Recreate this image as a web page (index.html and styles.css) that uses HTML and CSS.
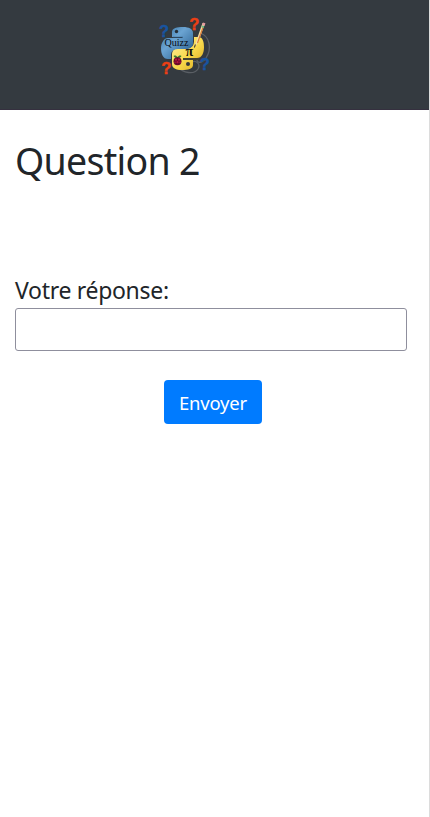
FILE: index.html
```html
<!DOCTYPE html>
<html lang="fr">
<head>
<meta charset="utf-8">
<meta name="viewport" content="width=device-width, initial-scale=1">
<title>Quizz Python</title>
<link rel="stylesheet" href="styles.css">
</head>
<body>
<div class="page">
  <header class="navbar">
    <svg class="logo" viewBox="0 0 70 70" role="img" aria-label="Quizz">
      <defs>
        <linearGradient id="blue" x1="0" y1="0" x2="1" y2="1">
          <stop offset="0" stop-color="#326d9f"/><stop offset=".4" stop-color="#6ba4d2"/><stop offset="1" stop-color="#1d5283"/>
        </linearGradient>
        <linearGradient id="yellow" x1="0" y1="0" x2="1" y2="1">
          <stop offset="0" stop-color="#fff0a0"/><stop offset=".55" stop-color="#f8d84a"/><stop offset="1" stop-color="#d7a51c"/>
        </linearGradient>
      </defs>
      <g fill="none" stroke="#5a5f65" stroke-width="1.3">
        <path d="M50 23c10 3 12 16 6 25-4 6-9 5-9 2"/>
        <path d="M28 57c5 6 16 8 20 2 3-5-2-9-6-7"/>
        <circle cx="38" cy="54" r="3.200"/>
      </g>
      <path fill="url(#yellow)" d="M44 27h4c5 0 6 5 6 10 0 6-2 11-7 11H33v2h10v5c0 4-5 5-11 5s-10-2-10-6v-9c0-5 3-7 7-7h9c4 0 6-3 6-7z"/>
      <path fill="url(#blue)" d="M22 27v-5c0-4 5-5 11-5s10 2 10 6v10c0 4-3 6-7 6h-8c-5 0-7 3-7 6v4h-3c-5 0-7-5-7-11 0-5 3-10 7-10h14v-1z"/>
      <circle cx="26.500" cy="21.500" r="1.700" fill="#252e38"/>
      <path d="M23 27.300h10" stroke="#244d70" stroke-width=".8"/>
      <path d="M33 49h16" stroke="#4f482b"/>
      <circle cx="38" cy="54" r="2" fill="#34383b"/>
      <text class="word" x="14.500" y="36" textLength="24" lengthAdjust="spacingAndGlyphs">Quizz</text>
      <text class="pi" x="35.500" y="46">π</text>
      <path d="M44.500 37.500l1.800-6.500L52.500 13l2.300.8-6.300 18z" fill="#f1dda5"/>
      <path d="M47.500 33l5.800-16.500" stroke="#dc7832" stroke-width="1.100"/>
      <path d="M53.300 15.500l.9-2.700" stroke="#e49a9f" stroke-width="2.600"/>
      <path d="M52.600 17.600l.6-1.700" stroke="#67b980" stroke-width="2.400"/>
      <path d="M44.500 37.500l.8-3" stroke="#27231c" stroke-width="1"/>
      <path d="M23.500 46c2-1 3 0 4 1 1-1 2-2 4-1-1 1.800-2 2-4 2s-3-.2-4-2z" fill="#397c32"/>
      <circle cx="27.500" cy="51.200" r="4" fill="#690c2b"/>
      <g fill="#ba1742"><circle cx="26" cy="49.700" r="1.100"/><circle cx="29" cy="49.700" r="1.100"/><circle cx="27.500" cy="52.200" r="1.100"/><circle cx="25" cy="52.200" r=".8"/><circle cx="30" cy="52.200" r=".8"/></g>
      <text class="mark blue" x="9" y="27">?</text>
      <text class="mark red" x="39.300" y="20">?</text>
      <text class="mark red" x="11.300" y="64">?</text>
      <text class="mark blue" x="49.800" y="60">?</text>
    </svg>
  </header>
  <main class="content">
    <h1 class="title"><span>Question 2</span></h1>
    <form class="answer">
      <label for="reponse">Votre réponse:</label>
      <input id="reponse" type="text">
      <button type="button">Envoyer</button>
    </form>
  </main>
</div>
</body>
</html>
```
FILE: styles.css
```css
* { box-sizing: border-box; }
body {
  margin: 0;
  background: #fff;
  color: #212529;
  font-family: "Segoe UI", "Noto Sans", sans-serif;
}
.page {
  min-height: 817px;
  border-right: 1px solid #dcdcdc;
}
.navbar {
  height: 110px;
  padding: 10px 0 0 150px;
  background: #343a40;
  border-bottom: 1px solid #35303f;
}
.logo { display: block; width: 70px; height: 70px; }
.word { font: 11px "Liberation Serif", serif; fill: #080d14; }
.pi { font: bold 14px "Liberation Serif", serif; fill: #15130c; }
.mark { font: bold 16.5px "Liberation Sans", sans-serif; stroke-width: .4px; }
.blue { fill: #1854a0; stroke: #1854a0; }
.red { fill: #ed3f14; stroke: #ed3f14; }
.content { padding: 27px 22px 0 15px; }
.title {
  margin: 0;
  height: 139px;
  font-size: 37.5px;
  font-weight: 400;
  line-height: 48px;
  letter-spacing: -.7px;
}
.answer { display: flex; flex-direction: column; }
label {
  height: 32px;
  font-size: 23px;
  line-height: 29px;
  letter-spacing: -.3px;
}
input {
  width: 392px;
  height: 43px;
  padding: 4px 8px;
  border: 1px solid #8f8f9d;
  border-radius: 3px;
  background: #fff;
  font: inherit;
  font-size: 23px;
}
button {
  width: 98px;
  height: 44px;
  margin: 29px 0 0 149px;
  padding: 0;
  border: 0;
  border-radius: 4px;
  background: #007bff;
  color: #fff;
  font: inherit;
  font-size: 18.5px;
  letter-spacing: -.2px;
}
```
